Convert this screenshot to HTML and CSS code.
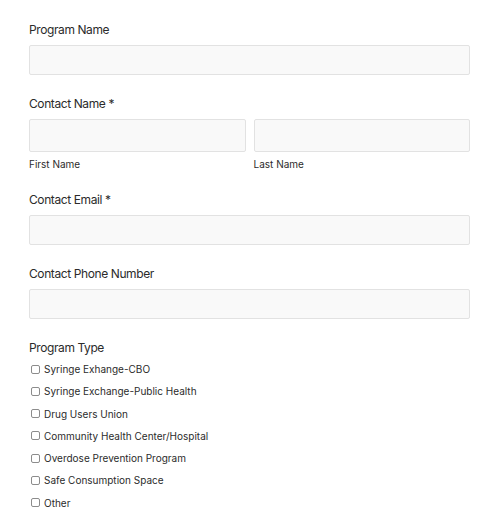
FILE: index.html
```html
<!DOCTYPE html>
<html lang="en">

<head>
    <meta charset="UTF-8">
    <title>Program Registration</title>
    <link rel="stylesheet" href="styles.css">
</head>

<body>
    <form class="form">
        <div class="field">
            <label class="label">Program Name</label>
            <input class="input" type="text">
        </div>

        <div class="field">
            <label class="label">Contact Name *</label>
            <div class="name-row">
                <div class="name-col">
                    <input class="input input-tall" type="text">
                    <span class="sublabel">First Name</span>
                </div>
                <div class="name-col">
                    <input class="input input-tall" type="text">
                    <span class="sublabel">Last Name</span>
                </div>
            </div>
        </div>

        <div class="field">
            <label class="label">Contact Email *</label>
            <input class="input" type="email">
        </div>

        <div class="field">
            <label class="label">Contact Phone Number</label>
            <input class="input" type="tel">
        </div>

        <div class="field">
            <label class="label">Program Type</label>
            <ul class="checks">
                <li><label><input type="checkbox"> Syringe Exhange-CBO</label></li>
                <li><label><input type="checkbox"> Syringe Exchange-Public Health</label></li>
                <li><label><input type="checkbox"> Drug Users Union</label></li>
                <li><label><input type="checkbox"> Community Health Center/Hospital</label></li>
                <li><label><input type="checkbox"> Overdose Prevention Program</label></li>
                <li><label><input type="checkbox"> Safe Consumption Space</label></li>
                <li><label><input type="checkbox"> Other</label></li>
            </ul>
        </div>
    </form>
</body>

</html>
```

FILE: styles.css
```css
* {
    margin: 0;
    padding: 0;
    box-sizing: border-box;
}

body {
    font-family: Inter, "Liberation Sans", sans-serif;
    color: #2b2b2b;
    background: #fff;
}

.form {
    width: 441px;
    margin-left: 29px;
    padding-top: 22px;
}

.field {
    margin-bottom: 21px;
}

.label {
    display: block;
    font-size: 12px;
    letter-spacing: -0.4px;
    line-height: 16px;
    margin-bottom: 7px;
}

.input {
    display: block;
    width: 100%;
    height: 30px;
    background-color: #f9f9f9;
    border: 1px solid #e2e2e2;
    border-radius: 2px;
    outline: none;
}
.input-tall {
    height: 33px;
}

.name-row {
    display: flex;
    gap: 8px;
}
.name-col {
    flex: 1;
}
.sublabel {
    display: block;
    font-size: 10px;
    line-height: 12px;
    margin-top: 6px;
    margin-bottom: 1px;
}

.checks {
    list-style: none;
}
.checks li {
    height: 22.3px;
    font-size: 10px;
    line-height: 12px;
}
.checks label {
    display: flex;
    align-items: center;
    gap: 3px;
}
.checks input {
    appearance: none;
    -webkit-appearance: none;
    width: 9px;
    height: 9px;
    margin-left: 2px;
    margin-right: 1px;
    border: 1px solid #8c8c8c;
    border-radius: 2px;
    background: #fff;
}
```
